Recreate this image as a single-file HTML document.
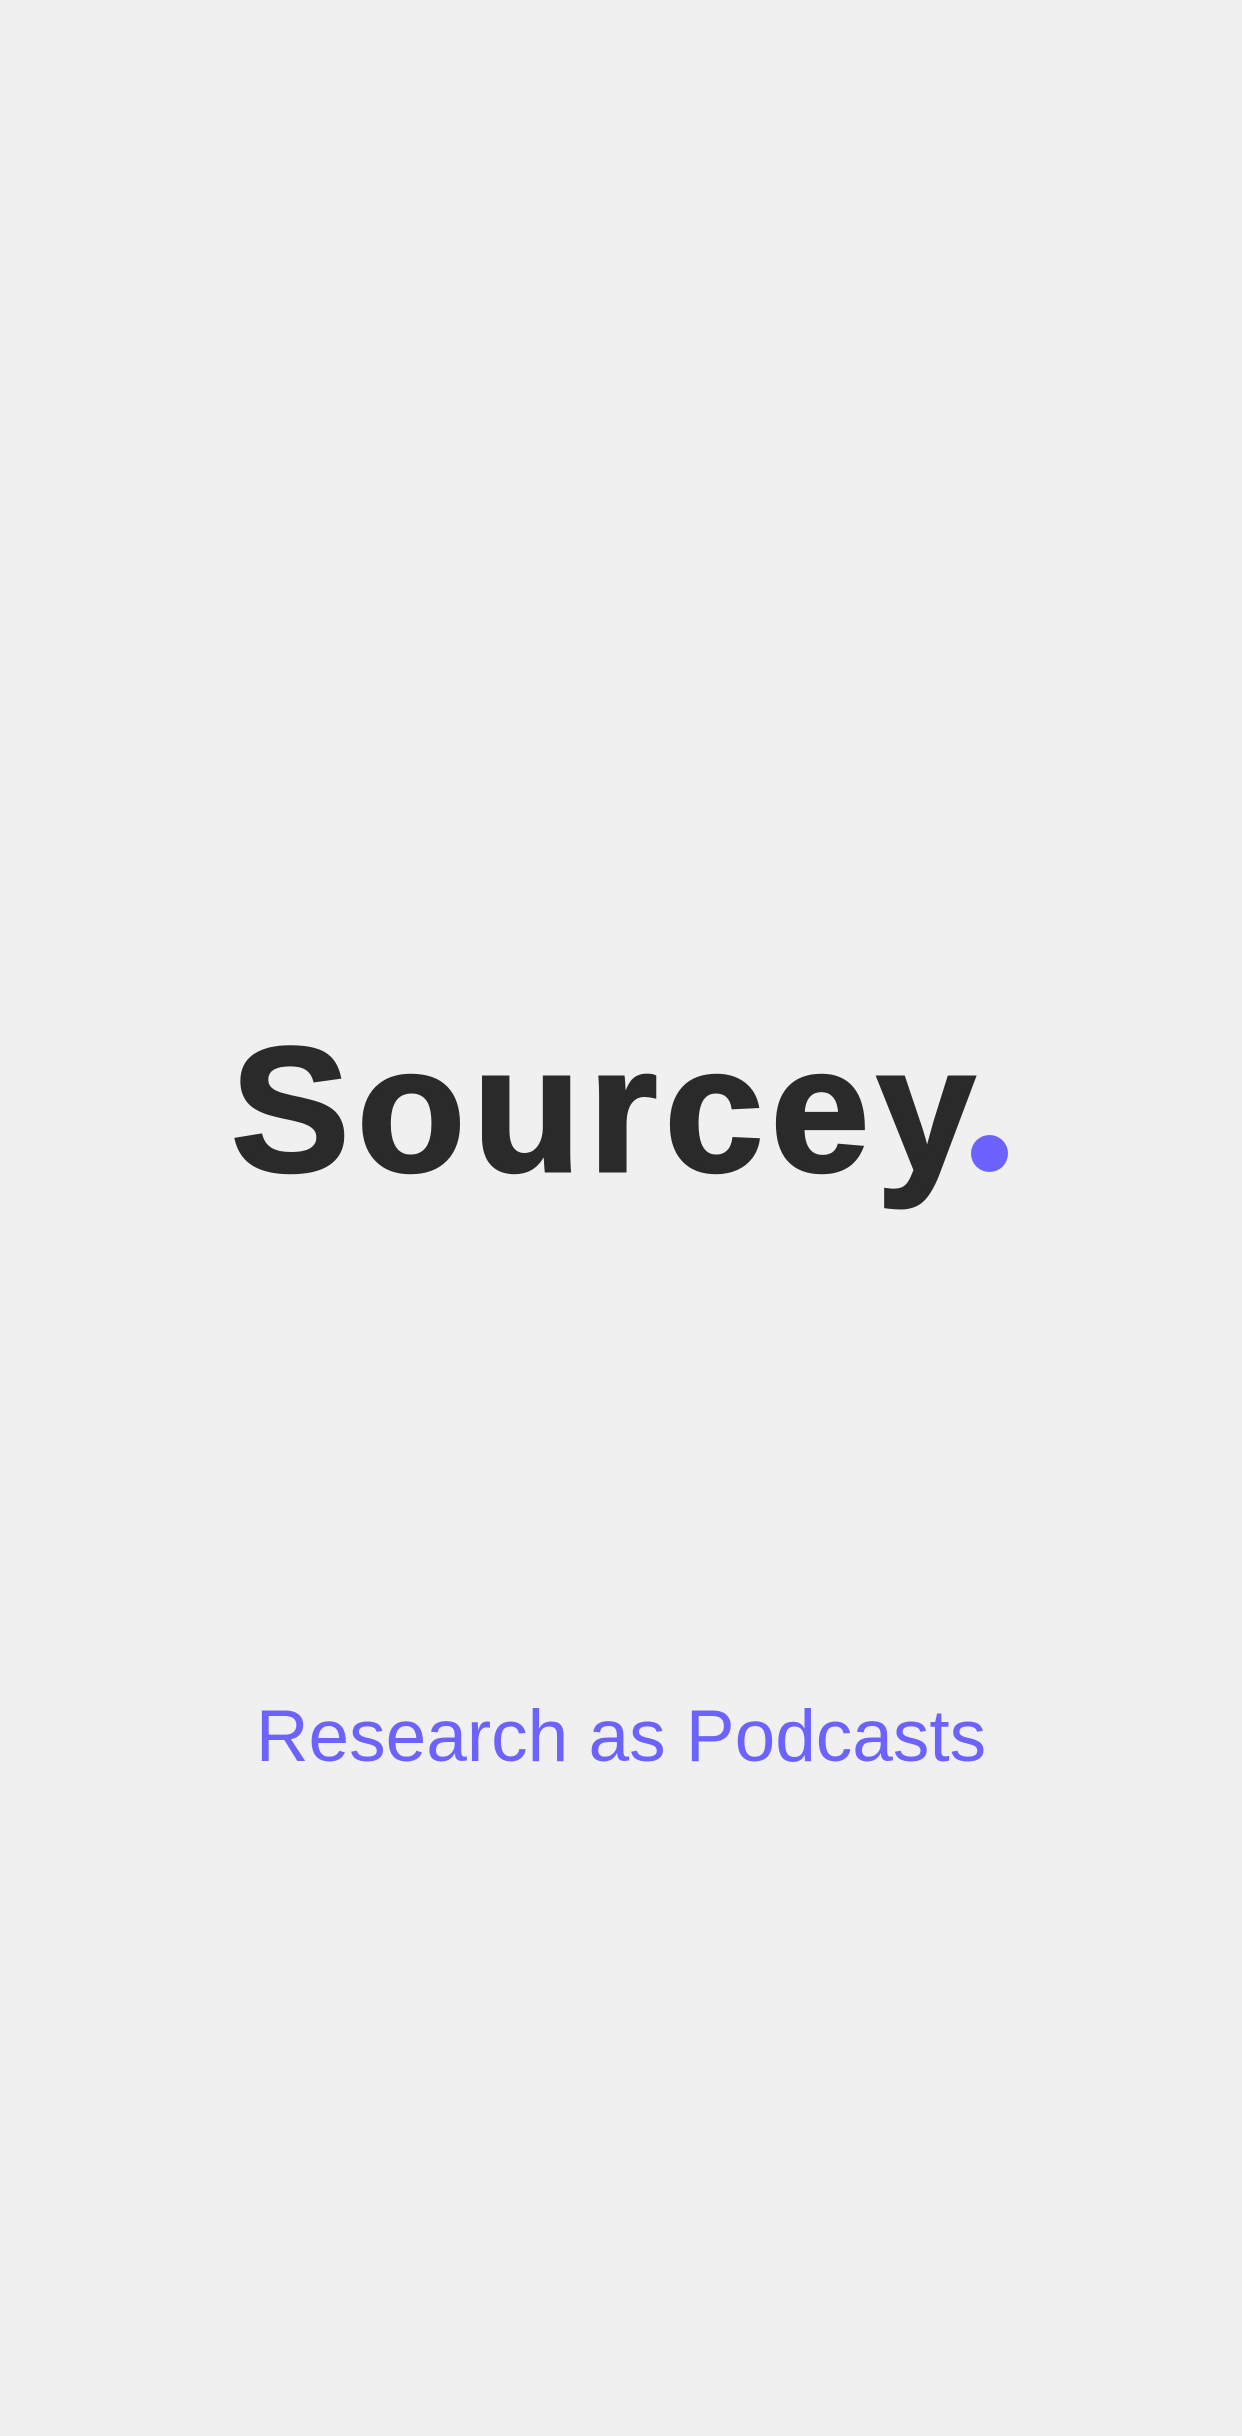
<!DOCTYPE html>
<html><head><meta charset="utf-8"><style>
html,body{margin:0;padding:0;width:1242px;height:2436px;background:#f0f0f0;overflow:hidden;position:relative}
.logo{position:absolute;left:231px;top:1000px;font-family:"Liberation Sans",sans-serif;font-weight:900;font-size:178px;line-height:220px;color:#2a2a2a;letter-spacing:7px;white-space:nowrap;-webkit-text-stroke:3px #2a2a2a}
.dot{position:absolute;left:971px;top:1135px;width:37px;height:37px;border-radius:50%;background:#6c63ff}
.tag{position:absolute;left:0;width:1242px;text-align:center;top:1692px;font-family:"Liberation Sans",sans-serif;font-size:73px;line-height:90px;color:#6c63ff;white-space:nowrap}
</style></head><body>
<div class="logo">Sourcey</div>
<div class="dot"></div>
<div class="tag">Research as Podcasts</div>
</body></html>
